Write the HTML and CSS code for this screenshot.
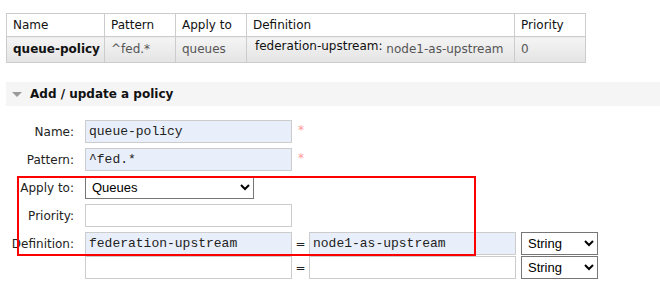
FILE: index.html
```html
<!DOCTYPE html>
<html lang="en">
<head>
    <meta charset="UTF-8">
    <title>Policies</title>
    <link rel="stylesheet" href="styles.css">
</head>
<body>
    <div class="page">
        <table class="policies">
            <thead>
                <tr>
                    <th class="col-name">Name</th>
                    <th class="col-pattern">Pattern</th>
                    <th class="col-apply">Apply to</th>
                    <th class="col-def">Definition</th>
                    <th class="col-prio">Priority</th>
                </tr>
            </thead>
            <tbody>
                <tr>
                    <td class="policy-name">queue-policy</td>
                    <td>^fed.*</td>
                    <td>queues</td>
                    <td><span class="def-key">federation-upstream:</span> <span class="def-value">node1-as-upstream</span></td>
                    <td>0</td>
                </tr>
            </tbody>
        </table>

        <div class="section">
            <h2 class="section-title"><span class="arrow"></span>Add / update a policy</h2>

            <form class="policy-form">
                <div class="field">
                    <label>Name:</label>
                    <input type="text" class="text filled" value="queue-policy">
                    <span class="req">*</span>
                </div>
                <div class="field">
                    <label>Pattern:</label>
                    <input type="text" class="text filled" value="^fed.*">
                    <span class="req">*</span>
                </div>
                <div class="field">
                    <label>Apply to:</label>
                    <select class="apply-select">
                        <option>Queues</option>
                        <option>Exchanges</option>
                        <option>Exchanges and queues</option>
                    </select>
                </div>
                <div class="field">
                    <label>Priority:</label>
                    <input type="text" class="text">
                </div>
                <div class="field tight">
                    <label>Definition:</label>
                    <input type="text" class="text filled" value="federation-upstream">
                    <span class="eq">=</span>
                    <input type="text" class="text filled" value="node1-as-upstream">
                    <select class="type-select">
                        <option>String</option>
                        <option>Number</option>
                        <option>Boolean</option>
                        <option>List</option>
                    </select>
                </div>
                <div class="field">
                    <label></label>
                    <input type="text" class="text">
                    <span class="eq">=</span>
                    <input type="text" class="text">
                    <select class="type-select">
                        <option>String</option>
                        <option>Number</option>
                        <option>Boolean</option>
                        <option>List</option>
                    </select>
                </div>
            </form>
        </div>

        <!-- annotation box drawn over the form -->
        <div class="highlight"></div>
    </div>
</body>
</html>
```

FILE: styles.css
```css
:root {
    --border: #cccccc;
    --text: #222222;
    --muted: #555555;
    --filled-bg: #e8effa;
}

body {
    margin: 0;
    font-family: 'DejaVu Sans', Verdana, sans-serif;
    font-size: 12px;
    color: var(--text);
    background: #ffffff;
}

.page {
    position: relative;
    padding: 13px 0 0 6px;
}

/* Policies table */
.policies {
    border-collapse: collapse;
    width: 580px;
    table-layout: fixed;
}

.policies th,
.policies td {
    border: 1px solid var(--border);
    text-align: left;
    white-space: nowrap;
    line-height: 15px;
}

.policies th {
    font-weight: normal;
    padding: 4px 6px 3px;
    background: #ffffff;
    color: #111111;
}

.policies td {
    padding: 5px 6px;
    color: var(--muted);
    background: linear-gradient(#f4f4f4, #e4e4e4);
}

.col-name { width: 85px; }
.col-pattern { width: 58px; }
.col-apply { width: 58px; }
.col-def { width: 255px; }

.policies td.policy-name {
    font-weight: bold;
    color: #111111;
}

.def-key {
    color: #111111;
    position: relative;
    top: -3px;
    margin-left: 2px;
}

.def-value {
    color: var(--muted);
}

/* Section */
.section {
    margin-top: 19px;
}

.section-title {
    margin: 0;
    height: 24px;
    display: flex;
    align-items: center;
    background: #f5f5f5;
    font-size: 12px;
    font-weight: bold;
    color: #111111;
}

.arrow {
    width: 0;
    height: 0;
    margin: 0 8px 0 6px;
    border-left: 5.5px solid transparent;
    border-right: 5.5px solid transparent;
    border-top: 5px solid #9a9a9a;
}

/* Form */
.policy-form {
    margin-top: 14px;
}

.field {
    display: flex;
    align-items: center;
    margin-bottom: 5px;
}

.field.tight {
    margin-bottom: 1px;
}

.field label {
    width: 68px;
    flex: none;
    margin-right: 11px;
    text-align: right;
    color: var(--text);
}

.text {
    box-sizing: border-box;
    width: 207px;
    height: 23px;
    padding: 0 3px;
    border: 1px solid var(--border);
    background: #ffffff;
    font-family: 'Liberation Mono', 'Courier New', monospace;
    font-size: 13px;
    color: #222222;
    outline: none;
}

.text.filled {
    background: var(--filled-bg);
}

.req {
    margin-left: 6px;
    color: #ff9999;
    font-size: 12px;
    align-self: flex-start;
    margin-top: 3px;
}

.eq {
    width: 17px;
    text-align: center;
    color: var(--text);
}

select {
    box-sizing: border-box;
    height: 23px;
    border: 1px solid #767676;
    border-radius: 0;
    background: #ffffff;
    font-family: 'Liberation Sans', Arial, sans-serif;
    font-size: 13px;
    color: #000000;
    padding: 0 2px;
}

.apply-select {
    width: 169px;
}

.type-select {
    width: 77px;
    margin-left: 5px;
}

/* Red annotation */
.highlight {
    position: absolute;
    left: 17px;
    top: 176px;
    width: 459px;
    height: 80px;
    box-sizing: border-box;
    border: 2px solid #ff0000;
    pointer-events: none;
}
```
